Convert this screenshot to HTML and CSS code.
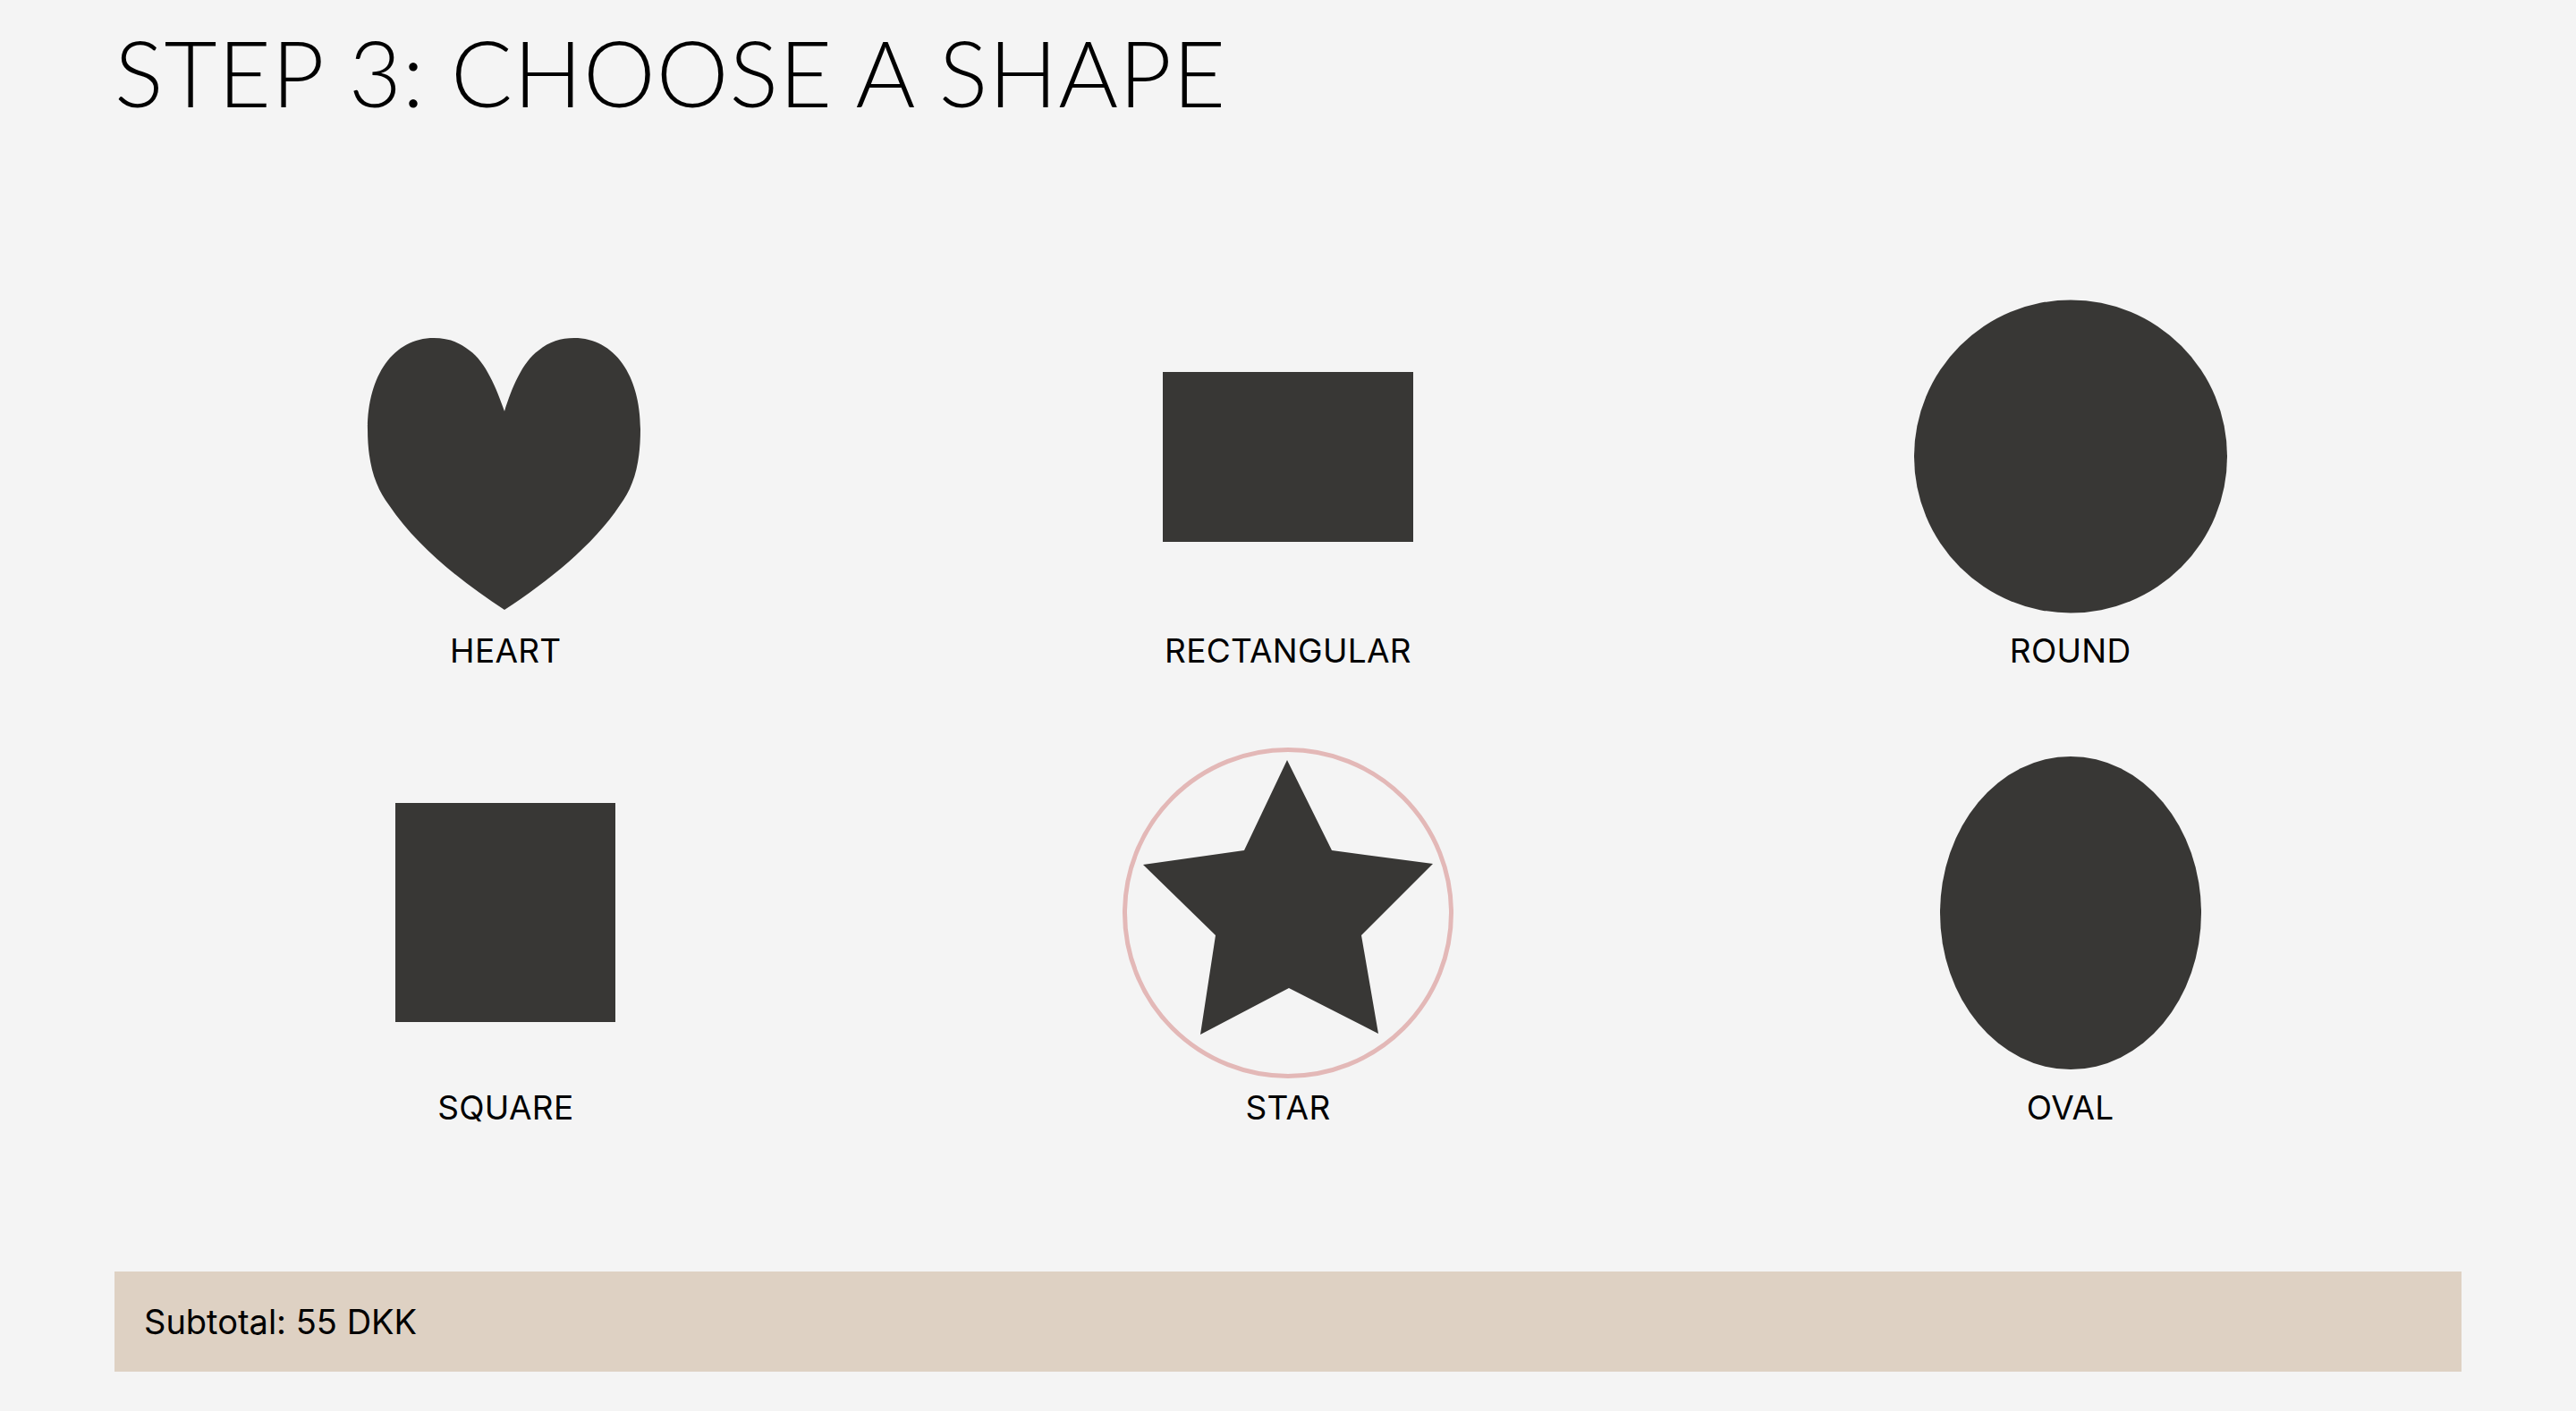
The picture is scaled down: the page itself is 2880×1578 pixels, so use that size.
FILE: index.html
```html
<!DOCTYPE html>
<html lang="en">
<head>
<meta charset="utf-8">
<title>Step 3: Choose a shape</title>
<link rel="stylesheet" href="styles.css">
</head>
<body>
<main class="page">
  <h1 class="title">STEP 3: CHOOSE A SHAPE</h1>
  <section class="shapes">
    <div class="shape-item">
      <svg class="shape" viewBox="0 0 380 380" width="380" height="380">
        <path class="fill" d="M189,140 C180,114 168,85 150,72 C138,62 125,58 110,58 C65,58 36,100 36,160 C36,200 45,225 60,245 C90,290 140,330 189,362 C238,330 288,290 318,245 C333,225 341,200 341,160 C341,100 312,58 267,58 C252,58 239,62 227,72 C209,85 197,114 189,140 Z"/>
      </svg>
      <span class="label">HEART</span>
    </div>
    <div class="shape-item">
      <svg class="shape" viewBox="0 0 380 380" width="380" height="380">
        <rect class="fill" x="50" y="96" width="280" height="190"/>
      </svg>
      <span class="label">RECTANGULAR</span>
    </div>
    <div class="shape-item">
      <svg class="shape" viewBox="0 0 380 380" width="380" height="380">
        <circle class="fill" cx="190" cy="190.5" r="175"/>
      </svg>
      <span class="label">ROUND</span>
    </div>
    <div class="shape-item">
      <svg class="shape" viewBox="0 0 380 380" width="380" height="380">
        <rect class="fill" x="67" y="67" width="246" height="245"/>
      </svg>
      <span class="label">SQUARE</span>
    </div>
    <div class="shape-item selected">
      <svg class="shape" viewBox="0 0 380 380" width="380" height="380">
        <circle class="ring" cx="190" cy="190" r="182.5"/>
        <polygon class="fill" points="189,19 239,120 352,135 272,215 291,325 191,274 92,326 109,215 28,136 141,120"/>
      </svg>
      <span class="label">STAR</span>
    </div>
    <div class="shape-item">
      <svg class="shape" viewBox="0 0 380 380" width="380" height="380">
        <ellipse class="fill" cx="190" cy="190" rx="146" ry="175"/>
      </svg>
      <span class="label">OVAL</span>
    </div>
  </section>
  <div class="subtotal">Subtotal: 55 DKK</div>
</main>
</body>
</html>
```

FILE: styles.css
```css
html, body {
  margin: 0;
  padding: 0;
  background: #f4f4f4;
}

.page {
  padding: 20px 128px 0 128px;
  display: flex;
  flex-direction: column;
  color: #000;
}

.title {
  margin: 0;
  font-family: Lato, "Liberation Sans", sans-serif;
  font-weight: 300;
  font-size: 102px;
  line-height: 1.2;
  letter-spacing: 1px;
  color: #000;
}

.shapes {
  margin-top: 178px;
  display: grid;
  grid-template-columns: repeat(3, 1fr);
  row-gap: 81px;
}

.shape-item {
  display: flex;
  flex-direction: column;
  align-items: center;
  gap: 6px;
}

.shape {
  display: block;
  width: 380px;
  height: 380px;
}

.fill {
  fill: #383735;
}

.ring {
  fill: none;
  stroke: #e3b8b7;
  stroke-width: 5;
}

.label {
  font-family: Inter, "Noto Sans", sans-serif;
  font-size: 37px;
  line-height: 44px;
  font-weight: 400;
  letter-spacing: 0.3px;
  color: #000;
}

.subtotal {
  margin-top: 161px;
  height: 112px;
  display: flex;
  align-items: center;
  padding-left: 33px;
  background: #ded1c3;
  font-family: Inter, "Noto Sans", sans-serif;
  font-size: 38px;
  color: #000;
}
```
